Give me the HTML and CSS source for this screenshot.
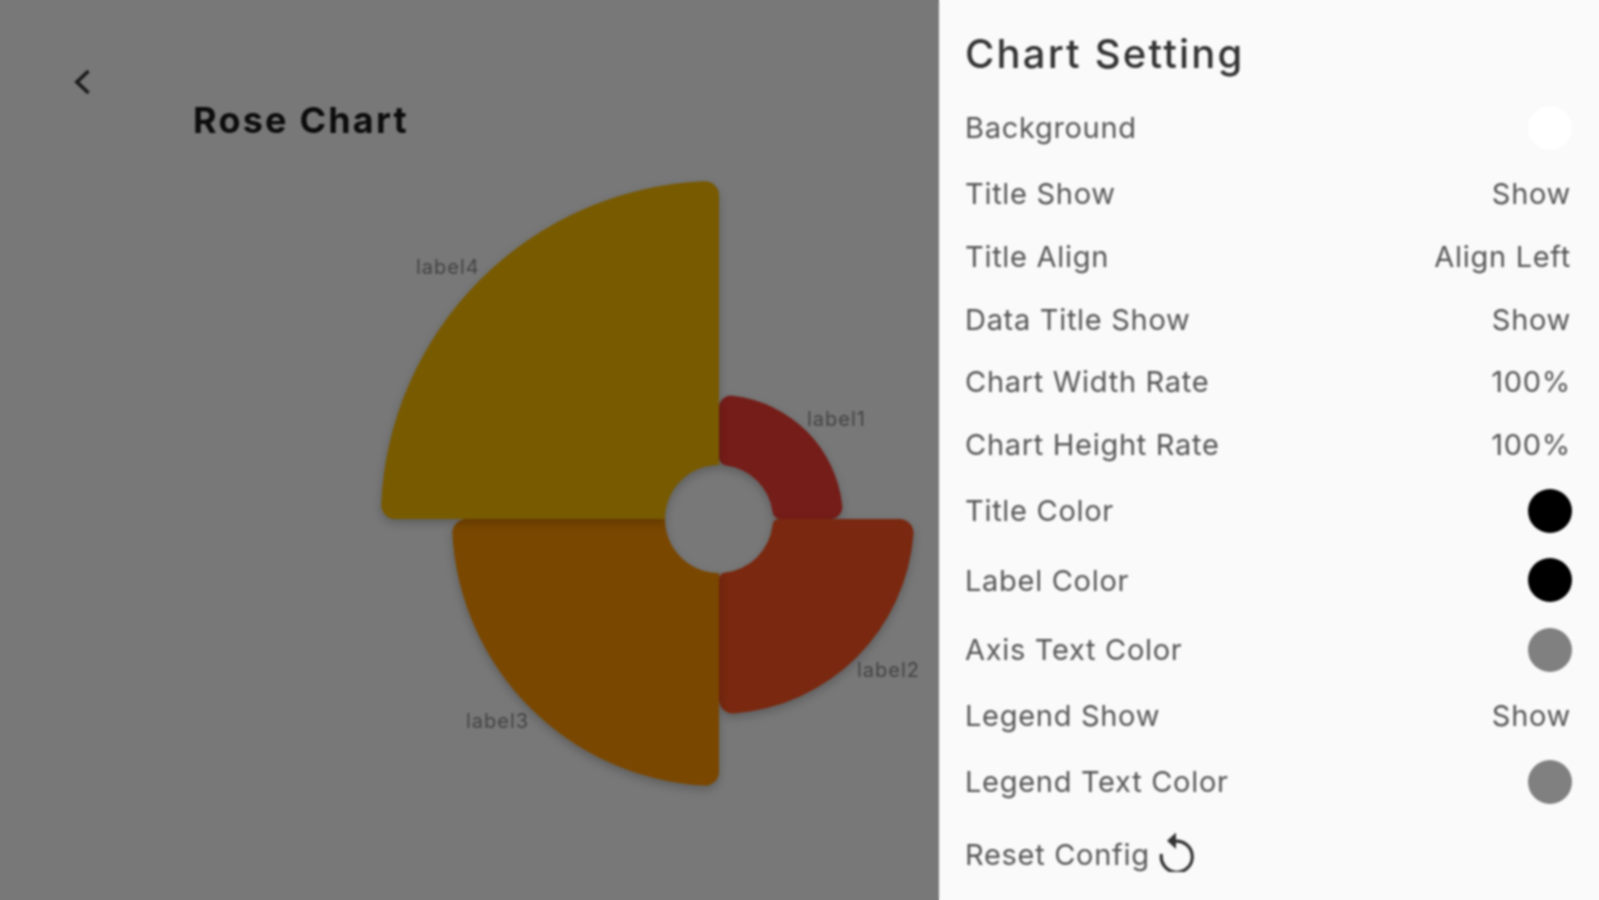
FILE: index.html
```html
<!DOCTYPE html>
<html lang="en">
<head>
<meta charset="utf-8">
<title>Rose Chart</title>
<link rel="stylesheet" href="styles.css">
</head>
<body>
<div class="app">
  <main class="stage">
    <div class="back">
      <svg class="back-icon" viewBox="0 0 18 28" aria-hidden="true"><path d="M15.5 3 4 14l11.5 11"/></svg>
    </div>
    <h1 class="chart-title">Rose Chart</h1>
    <svg class="rose" viewBox="0 170 939 730" aria-label="Rose chart">
      <path class="sector s1" d="M719,407.6 A12,12 0 0 1 732.3,395.7 A124,124 0 0 1 842.3,505.7 A12,12 0 0 1 830.4,519 L780.5,519 A8,8 0 0 1 772.6,512 A54,54 0 0 0 726,465.4 A8,8 0 0 1 719,457.5 Z"/>
      <path class="sector s2" d="M778.7,519 L899.5,519 A14,14 0 0 1 913.5,534.1 A195,195 0 0 1 734.1,713.5 A14,14 0 0 1 719,699.5 L719,578.7 A6,6 0 0 1 724.4,572.7 A54,54 0 0 0 772.7,524.4 A6,6 0 0 1 778.7,519 Z"/>
      <path class="sector s3" d="M665,519 L466.4,519 A14,14 0 0 0 452.4,533.8 A267,267 0 0 0 704.2,785.6 A14,14 0 0 0 719,771.6 L719,573 A54,54 0 0 1 665,519 Z"/>
      <path class="sector s4" d="M719,195.3 A14,14 0 0 0 704.4,181.3 A338,338 0 0 0 381.3,504.4 A14,14 0 0 0 395.3,519 L665,519 A54,54 0 0 1 719,465 Z"/>
      <text class="slice-label" x="807" y="426">label1</text>
      <text class="slice-label" x="857" y="677">label2</text>
      <text class="slice-label" x="466" y="728">label3</text>
      <text class="slice-label" x="416" y="274">label4</text>
    </svg>
  </main>
  <aside class="panel">
    <h2 class="panel-title">Chart Setting</h2>
    <div class="row tall"><span>Background</span><i class="swatch white"></i></div>
    <div class="row"><span>Title Show</span><span>Show</span></div>
    <div class="row"><span>Title Align</span><span>Align Left</span></div>
    <div class="row"><span>Data Title Show</span><span>Show</span></div>
    <div class="row"><span>Chart Width Rate</span><span>100%</span></div>
    <div class="row"><span>Chart Height Rate</span><span>100%</span></div>
    <div class="row tall"><span>Title Color</span><i class="swatch black"></i></div>
    <div class="row tall"><span>Label Color</span><i class="swatch black"></i></div>
    <div class="row tall"><span>Axis Text Color</span><i class="swatch grey"></i></div>
    <div class="row"><span>Legend Show</span><span>Show</span></div>
    <div class="row tall"><span>Legend Text Color</span><i class="swatch grey"></i></div>
    <div class="reset">
      <span>Reset Config</span>
      <svg class="reset-icon" viewBox="0 0 38 40" aria-hidden="true">
        <path class="reset-arc" d="M16 9.5 A15.5 15.5 0 1 1 3.5 22"/>
        <path class="reset-head" d="M18 0.5 9 8.8 18 17Z"/>
      </svg>
    </div>
  </aside>
</div>
</body>
</html>
```
FILE: styles.css
```css
* { box-sizing: border-box; }
html, body { margin: 0; height: 100%; overflow: hidden; }
body { font-family: Inter, "Noto Sans", sans-serif; background: linear-gradient(90deg, #787878 939px, #fafafa 939px); }

.app { display: flex; width: 1599px; height: 900px; filter: blur(0.9px); }

.stage { position: relative; width: 939px; flex: none; background: #787878; overflow: hidden; }
.back { height: 68px; padding-left: 73px; display: flex; align-items: flex-end; }
.back-icon { width: 18px; height: 28px; margin-bottom: -28px; fill: none; stroke: #1c1c1c; stroke-width: 3.8; }
.chart-title { margin: 30px 0 0 193px; height: 72px; font-size: 36px; line-height: 44px; font-weight: 700; letter-spacing: 2.2px; color: #0c0c0c; }
.rose { display: block; width: 939px; height: 730px; }
.sector { filter: drop-shadow(0 4px 5px rgba(0,0,0,.22)); }
.s1 { fill: #751d18; }
.s2 { fill: #7a2810; }
.s3 { fill: #7a4700; }
.s4 { fill: #785a00; }
.slice-label { font-size: 20px; letter-spacing: 1px; fill: #434343; }

.panel { width: 660px; flex: none; background: #fafafa; padding: 0 28px 0 26px; color: #565656; font-size: 29px; letter-spacing: 0.7px; }
.panel-title { margin: 0; height: 93px; padding-top: 30px; font-size: 40px; line-height: 48px; font-weight: 500; letter-spacing: 2.2px; color: #333; }
.row { height: 62.7px; display: flex; justify-content: space-between; align-items: center; }
.row.tall { height: 69.5px; }
.swatch { display: block; width: 44px; height: 44px; margin-right: -1px; border-radius: 50%; }
.white { background: #fff; }
.black { background: #000; }
.grey { background: #808080; }
.reset { height: 75px; display: flex; align-items: center; gap: 8px; }
.reset-icon { width: 38px; height: 40px; margin-top: -5px; }
.reset-arc { fill: none; stroke: #333; stroke-width: 3.2; }
.reset-head { fill: #333; }
```
